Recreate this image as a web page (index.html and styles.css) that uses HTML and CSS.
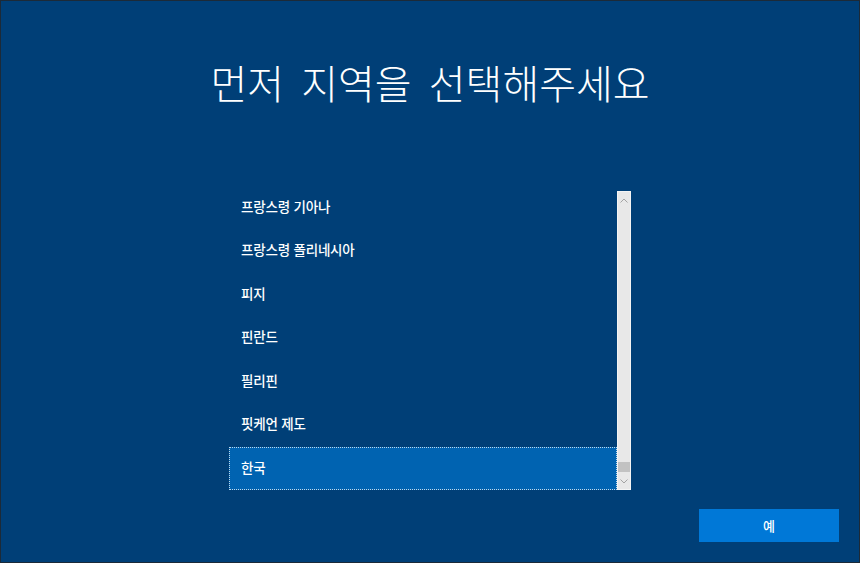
FILE: index.html
```html
<!DOCTYPE html>
<html lang="ko">
<head>
<meta charset="utf-8">
<title>지역 선택</title>
<link rel="stylesheet" href="styles.css">
</head>
<body>
<div class="screen">
  <h1 class="title">먼저 지역을 선택해주세요</h1>
  <div class="listbox">
    <div class="viewport">
      <ul class="items">
        <li class="item">프랑스령 기아나</li>
        <li class="item">프랑스령 폴리네시아</li>
        <li class="item">피지</li>
        <li class="item">핀란드</li>
        <li class="item">필리핀</li>
        <li class="item">핏케언 제도</li>
        <li class="item selected">한국</li>
      </ul>
    </div>
    <div class="scrollbar">
      <div class="arrow">
        <svg width="8" height="5" viewBox="0 0 8 5"><path d="M0.5 4.5 L4 1 L7.5 4.5" fill="none" stroke="#a3a3a3" stroke-width="1"/></svg>
      </div>
      <div class="track"><div class="thumb"></div></div>
      <div class="arrow">
        <svg width="8" height="5" viewBox="0 0 8 5"><path d="M0.5 0.5 L4 4 L7.5 0.5" fill="none" stroke="#a3a3a3" stroke-width="1"/></svg>
      </div>
    </div>
  </div>
  <div class="footer">
    <button class="btn">예</button>
  </div>
</div>
</body>
</html>
```

FILE: styles.css
```css
* { box-sizing: border-box; }
html, body { margin: 0; padding: 0; }
body {
  width: 860px;
  height: 563px;
  overflow: hidden;
  font-family: "Noto Sans CJK KR", "Noto Sans", sans-serif;
}
.screen {
  width: 860px;
  height: 563px;
  background: #003f77;
  border: 1px solid #1c2a38;
  display: flex;
  flex-direction: column;
  align-items: center;
}
.title {
  margin: 61px 0 0 0;
  font-size: 40px;
  line-height: 40px;
  font-weight: 300;
  color: #ffffff;
  letter-spacing: 0;
  word-spacing: 6px;
  white-space: nowrap;
}
.listbox {
  margin-top: 89px;
  width: 402px;
  height: 299px;
  display: flex;
}
.viewport {
  flex: 1;
  overflow: hidden;
}
.items {
  list-style: none;
  margin: -5.5px 0 0 0;
  padding: 0;
}
.item {
  height: 43.5px;
  display: flex;
  align-items: center;
  padding: 0 0 3px 12px;
  font-size: 13.5px;
  font-weight: 500;
  letter-spacing: -0.2px;
  color: #ffffff;
}
.item.selected {
  background: #0063b1;
  outline: 1px dotted rgba(255, 255, 255, 0.75);
  outline-offset: -1px;
}
.scrollbar {
  width: 14px;
  background: #e8e8e8;
  border: 1px solid #f4f4f4;
  display: flex;
  flex-direction: column;
}
.arrow {
  height: 16px;
  display: flex;
  align-items: center;
  justify-content: center;
}
.track {
  flex: 1;
  display: flex;
  flex-direction: column;
  justify-content: flex-end;
}
.thumb {
  height: 10px;
  margin: 0 0 1px 0;
  background: #c2c2c2;
}
.footer {
  width: 100%;
  margin-top: 19px;
  display: flex;
  justify-content: flex-end;
  padding-right: 20px;
}
.btn {
  width: 140px;
  height: 33px;
  border: none;
  background: #0078d7;
  color: #ffffff;
  font-family: "Noto Sans CJK KR", "Noto Sans", sans-serif;
  font-size: 13px;
  font-weight: 500;
  padding: 0;
}
```
